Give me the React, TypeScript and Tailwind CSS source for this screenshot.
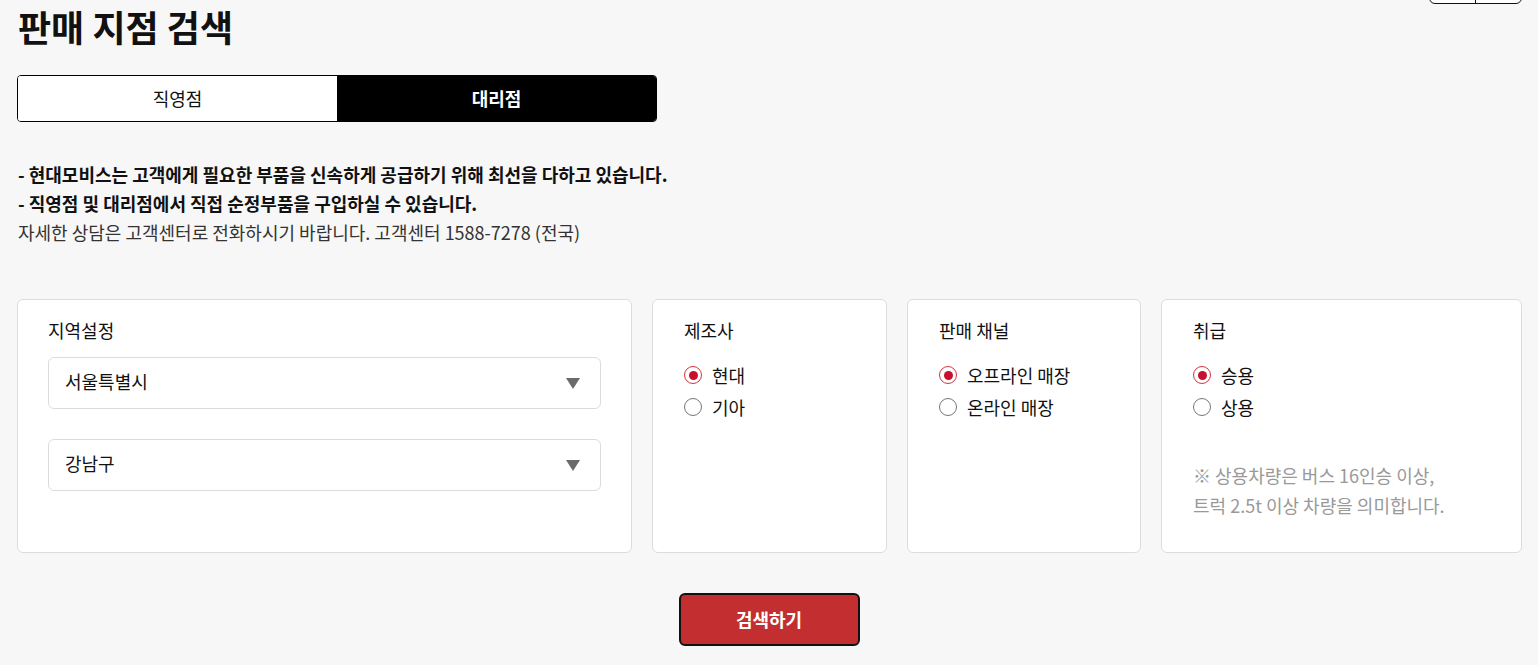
import { useState } from 'react';

const FONT = { fontFamily: '"Noto Sans CJK KR", "Noto Sans", sans-serif' };

function Radio({ checked, label, onClick }: { checked: boolean; label: string; onClick: () => void }) {
  return (
    <button type="button" onClick={onClick} className="flex items-center gap-[10px] h-8 text-left">
      <span
        className={
          checked
            ? 'w-[18px] h-[18px] rounded-full border-[1.5px] border-[#d3343a] flex items-center justify-center'
            : 'w-[18px] h-[18px] rounded-full border-[1.5px] border-[#777] flex items-center justify-center'
        }
      >
        {checked && <span className="w-[9px] h-[9px] rounded-full bg-[#c8102e]" />}
      </span>
      <span className="text-[18px] leading-8 text-[#111]">{label}</span>
    </button>
  );
}

function Select({ value }: { value: string }) {
  return (
    <div className="h-[52px] border border-[#dcdcdc] rounded-md bg-white flex items-center justify-between pl-4 pr-5">
      <span className="text-[18px] text-[#111] pb-[3px]">{value}</span>
      <svg width="14" height="11" viewBox="0 0 14 11">
        <path d="M0 0h14L7 11z" fill="#6b6b6b" />
      </svg>
    </div>
  );
}

export default function App() {
  const [tab, setTab] = useState(1);
  const [maker, setMaker] = useState(0);
  const [channel, setChannel] = useState(0);
  const [kind, setKind] = useState(0);

  return (
    <div className="relative min-h-[665px] bg-[#f7f7f7] text-[#111] overflow-hidden" style={FONT}>
      {/* scrolled-off toggle at top right */}
      <div className="absolute left-[1429px] top-[-30px] w-[93px] h-[34px] flex border border-[#111] rounded-b-md bg-white">
        <div className="flex-1 border-r border-[#111]" />
        <div className="flex-1" />
      </div>

      <div className="pl-[17px] pr-4 pt-[4px]">
        <h1 className="text-[36px] font-bold leading-[44px] pl-px">판매 지점 검색</h1>

        {/* Tabs */}
        <div className="mt-[27px] w-[640px] h-[47px] flex border border-black rounded-[4px] overflow-hidden text-[18px]">
          <button
            type="button"
            onClick={() => setTab(0)}
            className={tab === 0 ? 'flex-1 bg-black text-white font-bold' : 'flex-1 bg-white text-[#111]'}
          >
            직영점
          </button>
          <button
            type="button"
            onClick={() => setTab(1)}
            className={tab === 1 ? 'flex-1 bg-black text-white font-bold' : 'flex-1 bg-white text-[#111]'}
          >
            대리점
          </button>
        </div>

        {/* Notice */}
        <div className="mt-[38px] text-[18px] leading-[29px] pl-px">
          <p className="font-bold">- 현대모비스는 고객에게 필요한 부품을 신속하게 공급하기 위해 최선을 다하고 있습니다.</p>
          <p className="font-bold">- 직영점 및 대리점에서 직접 순정부품을 구입하실 수 있습니다.</p>
          <p className="text-[#333]">자세한 상담은 고객센터로 전화하시기 바랍니다. 고객센터 1588-7278 (전국)</p>
        </div>

        {/* Filters */}
        <div className="mt-[52px] flex gap-5 h-[254px]">
          <div className="w-[615px] bg-white border border-[#dcdcdc] rounded-md px-[30px] pt-[18px]">
            <div className="text-[18px] leading-6">지역설정</div>
            <div className="mt-[15px] flex flex-col gap-[30px]">
              <Select value="서울특별시" />
              <Select value="강남구" />
            </div>
          </div>

          <div className="w-[235px] bg-white border border-[#dcdcdc] rounded-md px-[31px] pt-[18px]">
            <div className="text-[18px] leading-6">제조사</div>
            <div className="mt-[17px] flex flex-col">
              <Radio checked={maker === 0} label="현대" onClick={() => setMaker(0)} />
              <Radio checked={maker === 1} label="기아" onClick={() => setMaker(1)} />
            </div>
          </div>

          <div className="w-[234px] bg-white border border-[#dcdcdc] rounded-md px-[31px] pt-[18px]">
            <div className="text-[18px] leading-6">판매 채널</div>
            <div className="mt-[17px] flex flex-col">
              <Radio checked={channel === 0} label="오프라인 매장" onClick={() => setChannel(0)} />
              <Radio checked={channel === 1} label="온라인 매장" onClick={() => setChannel(1)} />
            </div>
          </div>

          <div className="w-[361px] bg-white border border-[#dcdcdc] rounded-md px-[31px] pt-[18px]">
            <div className="text-[18px] leading-6">취급</div>
            <div className="mt-[17px] flex flex-col">
              <Radio checked={kind === 0} label="승용" onClick={() => setKind(0)} />
              <Radio checked={kind === 1} label="상용" onClick={() => setKind(1)} />
            </div>
            <p className="mt-[37px] text-[18px] leading-[30px] text-[#999]">
              ※ 상용차량은 버스 16인승 이상,
              <br />
              트럭 2.5t 이상 차량을 의미합니다.
            </p>
          </div>
        </div>

        <div className="mt-[40px] flex justify-center pr-px">
          <button
            type="button"
            className="w-[181px] h-[53px] bg-[#c32f31] text-white font-bold text-[18px] border-2 border-[#111] rounded-md"
          >
            검색하기
          </button>
        </div>
      </div>
    </div>
  );
}
